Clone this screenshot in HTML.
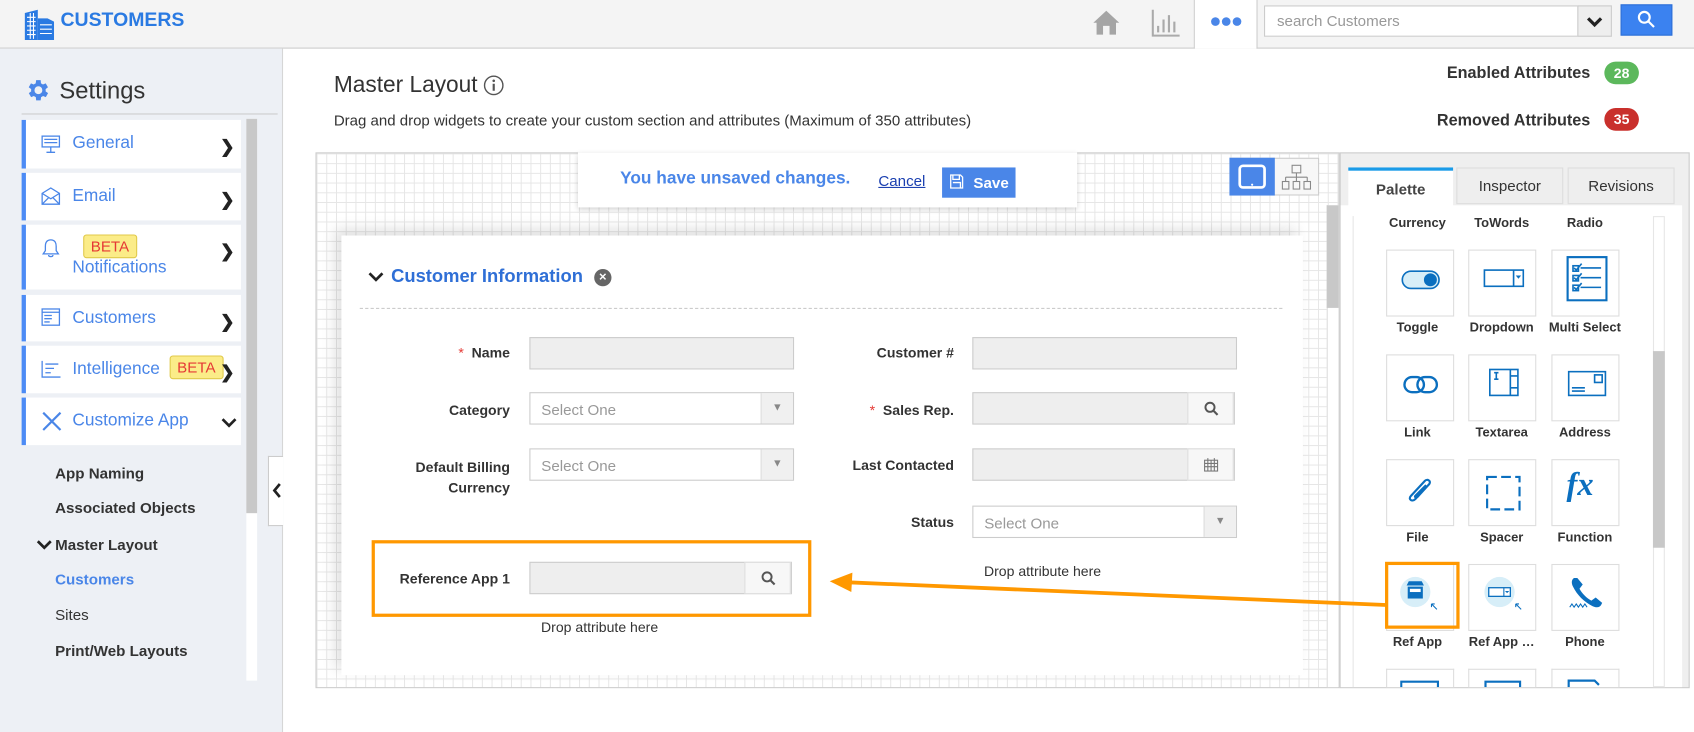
<!DOCTYPE html>
<html><head><meta charset="utf-8">
<style>
*{box-sizing:border-box;margin:0;padding:0}
html,body{width:1694px;height:732px;overflow:hidden;background:#fff;font-family:"Liberation Sans",Arial,sans-serif;color:#333}
#w{position:absolute;left:0;top:0;width:1568px;height:678px;transform:scale(1.08036);transform-origin:0 0}
.a{position:absolute}
.hdr{left:0;top:0;width:1568px;height:45px;background:#f4f4f4;border-bottom:1px solid #ccc}
.side{left:0;top:45px;width:262px;height:633px;background:#edf0f5;border-right:1px solid #d6d6d6}
.mi{position:absolute;left:20px;width:203px;background:#fff;border-left:4px solid #4c8bf5;font-size:16px;color:#4a86e8}
.mi .t{position:absolute;left:43px}
.mi .ic{position:absolute;left:14px}
.chev{position:absolute;right:6px;font-size:16px;color:#222;font-weight:bold}
.sub{position:absolute;left:51px;font-size:14px;font-weight:bold;color:#333}
.beta{position:absolute;background:#fbec88;border:1px solid #e0c94a;border-radius:3px;color:#e53935;font-size:14px;padding:2px 6px;font-weight:normal}
.grid{background-color:#fff;background-image:linear-gradient(#e6e6e6 1px,transparent 1px),linear-gradient(90deg,#e6e6e6 1px,transparent 1px);background-size:9px 9px}
.lbl{position:absolute;font-size:13px;font-weight:bold;color:#333;text-align:right}
.inp{position:absolute;height:30px;background:#eee;border:1px solid #ccc}
.sel{position:absolute;height:30px;background:#fff;border:1px solid #ccc;font-size:14px;color:#999;padding:7px 10px}
.sel .dd{position:absolute;right:0;top:0;width:30px;height:28px;background:#f0f0f0;border-left:1px solid #ddd;color:#888;font-size:10px;text-align:center;line-height:28px}
.addon{position:absolute;right:0;top:-1px;width:43px;height:30px;background:#f7f7f7;border:1px solid #ddd}
.tile{position:absolute;width:63px;height:62px;background:#fff;border:1px solid #ddd}
.tl{position:absolute;width:80px;text-align:center;font-size:12px;font-weight:bold;color:#333}
</style></head><body><div id="w">
<!-- header -->
<div class="a hdr"></div>
<svg class="a" style="left:22px;top:8px" width="30" height="30" viewBox="0 0 30 30"><path d="M1 4 L13 1 V29 H1Z" fill="#2a7ae2"/><path d="M13 9 H22 L28 12 V29 H13Z" fill="#2a7ae2"/><g stroke="#fff" stroke-width="1"><path d="M3 8H11M3 12H11M3 16H11M3 20H11M3 24H11M15 15H26M15 19H26M15 23H26"/><path d="M6 4V28M9 4V28"/></g></svg>
<div class="a" style="left:56px;top:8px;font-size:18px;font-weight:bold;color:#2a7ae2">CUSTOMERS</div>
<svg class="a" style="left:1011px;top:8px" width="26" height="25" viewBox="0 0 26 25"><path d="M13 2 L1 13 H4 V24 H10 V16 H16 V24 H22 V13 H25Z" fill="#a5a5a5"/></svg>
<svg class="a" style="left:1066px;top:8px" width="26" height="26" viewBox="0 0 26 26"><g stroke="#aaa" stroke-width="2" fill="none"><path d="M1 1V25H26"/><path d="M6 22V16M11 22V10M16 22V6M21 22V12"/></g></svg>
<div class="a" style="left:1105px;top:0;width:1px;height:45px;background:#ccc"></div>
<div class="a" style="left:1163px;top:0;width:1px;height:45px;background:#ccc"></div>
<div class="a" style="left:1106px;top:0;width:57px;height:45px;background:#fff"></div>
<svg class="a" style="left:1120px;top:14px" width="30" height="12" viewBox="0 0 30 12"><circle cx="5" cy="6" r="4" fill="#4a86e8"/><circle cx="15" cy="6" r="4" fill="#4a86e8"/><circle cx="25" cy="6" r="4" fill="#4a86e8"/></svg>
<div class="a" style="left:1170px;top:5px;width:322px;height:29px;background:#fff;border:1px solid #ccc"></div>
<div class="a" style="left:1182px;top:11px;font-size:14px;color:#999">search Customers</div>
<div class="a" style="left:1460px;top:5px;width:32px;height:29px;background:#eee;border:1px solid #ccc"></div>
<svg class="a" style="left:1466px;top:14px" width="20" height="12" viewBox="0 0 20 12"><path d="M4 3 L10 9 L16 3" stroke="#222" stroke-width="3" fill="none"/></svg>
<div class="a" style="left:1500px;top:4px;width:48px;height:29px;background:#3b82f0;border:1px solid #2d6fd6"></div>
<svg class="a" style="left:1515px;top:9px" width="18" height="18" viewBox="0 0 18 18"><circle cx="7" cy="7" r="5" stroke="#fff" stroke-width="2" fill="none"/><path d="M11 11 L16 16" stroke="#fff" stroke-width="2"/></svg>
<!-- sidebar -->
<div class="a side"></div>
<svg class="a" style="left:22px;top:71px" width="25" height="25" viewBox="0 0 24 24"><path fill="#4a86e8" d="M19.4 13a7.5 7.5 0 0 0 0-2l2.1-1.6-2-3.5-2.5 1a7 7 0 0 0-1.7-1L15 3h-4l-.4 2.9a7 7 0 0 0-1.7 1l-2.5-1-2 3.5L6.6 11a7.5 7.5 0 0 0 0 2l-2.1 1.6 2 3.5 2.5-1a7 7 0 0 0 1.7 1L11 21h4l.4-2.9a7 7 0 0 0 1.7-1l2.5 1 2-3.5zM13 15.5a3.5 3.5 0 1 1 0-7 3.5 3.5 0 0 1 0 7z"/></svg>
<div class="a" style="left:55px;top:71px;font-size:22px;color:#333">Settings</div>
<div class="a" style="left:20px;top:105px;width:237px;height:1px;background:#ccc"></div>
<div class="mi" style="top:111px;height:45px"><svg class="ic" style="top:14px" width="18" height="17" viewBox="0 0 18 17"><g stroke="#4a86e8" fill="none" stroke-width="1.2"><rect x="1" y="1" width="16" height="10"/><path d="M3 4H15M3 7H15M9 11V16M5 16H13"/></g></svg><span class="t" style="top:13px">General</span><span class="chev" style="top:15px">&#10095;</span></div>
<div class="mi" style="top:160px;height:44px"><svg class="ic" style="top:13px" width="18" height="17" viewBox="0 0 18 17"><g stroke="#4a86e8" fill="none" stroke-width="1.2"><path d="M1 6 L9 1 L17 6 V16 H1Z"/><path d="M1 6 L9 11 L17 6M1 16 L7 10M17 16 L11 10"/></g></svg><span class="t" style="top:13px">Email</span><span class="chev" style="top:15px">&#10095;</span></div>
<div class="mi" style="top:208px;height:60px"><svg class="ic" style="top:12px" width="18" height="20" viewBox="0 0 18 20"><path d="M9 2 C5 2 4 5 4 8 V12 L2 15 H16 L14 12 V8 C14 5 13 2 9 2Z M7 16 C7 18 11 18 11 16" stroke="#4a86e8" fill="none" stroke-width="1.2"/></svg><span class="beta" style="left:53px;top:9px">BETA</span><span class="t" style="top:31px">Notifications</span><span class="chev" style="top:15px">&#10095;</span></div>
<div class="mi" style="top:273px;height:43px"><svg class="ic" style="top:12px" width="18" height="17" viewBox="0 0 18 17"><g stroke="#4a86e8" fill="none" stroke-width="1.2"><rect x="1" y="1" width="16" height="15"/><path d="M1 4H17M3 7H10M3 10H10M3 13H8"/></g></svg><span class="t" style="top:13px">Customers</span><span class="chev" style="top:15px">&#10095;</span></div>
<div class="mi" style="top:320px;height:44px"><svg class="ic" style="top:13px" width="18" height="17" viewBox="0 0 18 17"><g stroke="#4a86e8" fill="none" stroke-width="1.2"><path d="M1 1V16H18M4 4H16M4 8H12M4 12H9"/></g></svg><span class="t" style="top:13px">Intelligence</span><span class="beta" style="left:133px;top:9px">BETA</span><span class="chev" style="top:15px">&#10095;</span></div>
<div class="mi" style="top:368px;height:44px"><svg class="ic" style="top:12px" width="20" height="19" viewBox="0 0 20 19"><g stroke="#4a86e8" stroke-width="2" fill="none"><path d="M2 2 L18 18M18 2 L2 18"/></g></svg><span class="t" style="top:13px">Customize App</span><svg style="position:absolute;right:4px;top:18px" width="14" height="10" viewBox="0 0 14 10"><path d="M1 2 L7 8 L13 2" stroke="#222" stroke-width="2.5" fill="none"/></svg></div>
<div class="a" style="left:228px;top:110px;width:10px;height:520px;background:#fff"></div>
<div class="a" style="left:228px;top:110px;width:10px;height:365px;background:#c8c8c8"></div>
<div class="sub" style="top:430px">App Naming</div>
<div class="sub" style="top:462px">Associated Objects</div>
<div class="sub" style="top:496px">Master Layout</div>
<svg class="a" style="left:34px;top:499px" width="14" height="11" viewBox="0 0 14 11"><path d="M1 2 L7 8 L13 2" stroke="#222" stroke-width="2.5" fill="none"/></svg>
<div class="sub" style="top:528px;color:#4a86e8">Customers</div>
<div class="sub" style="top:561px;font-weight:normal">Sites</div>
<div class="sub" style="top:594px">Print/Web Layouts</div>
<div class="a" style="left:248px;top:422px;width:14px;height:65px;background:#fff;border:1px solid #ccc;border-right:none"></div>
<svg class="a" style="left:252px;top:447px" width="9" height="14" viewBox="0 0 9 14"><path d="M7 1 L2 7 L7 13" stroke="#222" stroke-width="2.5" fill="none"/></svg>
<!-- main -->
<div class="a" style="left:309px;top:67px;font-size:21px;color:#333">Master Layout</div>
<svg class="a" style="left:447px;top:69px" width="20" height="20" viewBox="0 0 20 20"><circle cx="10" cy="10" r="8.5" stroke="#555" stroke-width="1.3" fill="none"/><circle cx="10" cy="5.8" r="1.2" fill="#555"/><path d="M10 8.5V15" stroke="#555" stroke-width="2"/></svg>
<div class="a" style="left:309px;top:103px;font-size:13.9px;color:#333">Drag and drop widgets to create your custom section and attributes (Maximum of 350 attributes)</div>
<div class="a" style="left:1300px;top:59px;width:172px;text-align:right;font-size:15px;font-weight:bold;color:#333">Enabled Attributes</div>
<div class="a" style="left:1485px;top:57px;width:32px;height:21px;border-radius:11px;background:#5cb85c;color:#fff;font-size:13px;font-weight:bold;text-align:center;line-height:21px">28</div>
<div class="a" style="left:1300px;top:103px;width:172px;text-align:right;font-size:15px;font-weight:bold;color:#333">Removed Attributes</div>
<div class="a" style="left:1485px;top:100px;width:32px;height:21px;border-radius:11px;background:#c9302c;color:#fff;font-size:13px;font-weight:bold;text-align:center;line-height:21px">35</div>
<!-- canvas -->
<div class="a grid" style="left:292px;top:141px;width:948px;height:496px;border:1px solid #ccc"></div>
<div class="a" style="left:316px;top:218px;width:890px;height:407px;background:#fff;box-shadow:-6px -6px 12px rgba(0,0,0,0.12)"></div>
<div class="a" style="left:1228px;top:190px;width:11px;height:446px;background:#fff;border-left:1px solid #ddd"></div>
<div class="a" style="left:1228px;top:190px;width:11px;height:95px;background:#c8c8c8"></div>
<div class="a" style="left:535px;top:141px;width:462px;height:51px;background:#fff;box-shadow:0 2px 5px rgba(0,0,0,0.2)"></div>
<div class="a" style="left:574px;top:157px;font-size:16px;font-weight:bold;color:#4a86e8">You have unsaved changes.</div>
<div class="a" style="left:813px;top:159px;font-size:14px;color:#1a3fb0;text-decoration:underline">Cancel</div>
<div class="a" style="left:872px;top:155px;width:68px;height:28px;background:#4a86e8;color:#fff;font-size:14px;font-weight:bold;padding:6px 0 0 29px">Save</div>
<svg class="a" style="left:879px;top:161px" width="13" height="14" viewBox="0 0 13 14"><path d="M1 1H10L12 3V13H1Z M3 1V5H9V1 M3 8H10V13" stroke="#fff" fill="none" stroke-width="1.2"/></svg>
<div class="a" style="left:1138px;top:146px;width:83px;height:35px;border:1px solid #ccc;background:#f7f7f7"></div>
<div class="a" style="left:1138px;top:146px;width:42px;height:35px;background:#4a86e8"></div>
<svg class="a" style="left:1146px;top:152px" width="26" height="23" viewBox="0 0 26 23"><rect x="1.5" y="1.5" width="23" height="20" rx="3" stroke="#fff" stroke-width="2.5" fill="none"/><circle cx="13" cy="19" r="1" fill="#fff"/></svg>
<svg class="a" style="left:1186px;top:152px" width="28" height="24" viewBox="0 0 28 24"><g stroke="#888" fill="none" stroke-width="1"><rect x="10" y="1" width="8" height="7"/><path d="M14 8V12M4 12H24M4 12V16M14 12V16M24 12V16"/><rect x="1" y="16" width="6" height="7"/><rect x="11" y="16" width="6" height="7"/><rect x="21" y="16" width="6" height="7"/></g></svg>
<!-- section -->
<svg class="a" style="left:341px;top:251px" width="14" height="10" viewBox="0 0 14 10"><path d="M1 2 L7 8 L13 2" stroke="#222" stroke-width="2.5" fill="none"/></svg>
<div class="a" style="left:362px;top:246px;font-size:17px;font-weight:bold;color:#2f6fd6">Customer Information</div>
<div class="a" style="left:550px;top:249px;width:16px;height:16px;border-radius:50%;background:#666;color:#fff;font-size:12px;text-align:center;line-height:15px;font-weight:bold">×</div>
<div class="a" style="left:333px;top:285px;width:854px;border-top:1px dashed #ccc"></div>
<div class="lbl" style="left:330px;top:319px;width:142px"><span style="color:#e53935;font-weight:normal">*</span>&nbsp; Name</div>
<div class="inp" style="left:490px;top:312px;width:245px"></div>
<div class="lbl" style="left:330px;top:372px;width:142px">Category</div>
<div class="sel" style="left:490px;top:363px;width:245px">Select One<div class="dd">▼</div></div>
<div class="lbl" style="left:330px;top:423px;width:142px;line-height:19px">Default Billing<br>Currency</div>
<div class="sel" style="left:490px;top:415px;width:245px">Select One<div class="dd">▼</div></div>
<div class="lbl" style="left:740px;top:319px;width:143px">Customer #</div>
<div class="inp" style="left:900px;top:312px;width:245px"></div>
<div class="lbl" style="left:740px;top:372px;width:143px"><span style="color:#e53935;font-weight:normal">*</span>&nbsp; Sales Rep.</div>
<div class="inp" style="left:900px;top:363px;width:243px"><div class="addon"></div></div>
<svg class="a" style="left:1114px;top:371px" width="14" height="14" viewBox="0 0 14 14"><circle cx="6" cy="6" r="4.2" stroke="#555" stroke-width="1.8" fill="none"/><path d="M9 9 L13 13" stroke="#555" stroke-width="2"/></svg>
<div class="lbl" style="left:740px;top:423px;width:143px">Last Contacted</div>
<div class="inp" style="left:900px;top:415px;width:243px"><div class="addon"></div></div>
<svg class="a" style="left:1114px;top:423px" width="14" height="14" viewBox="0 0 14 14"><g stroke="#777" fill="none" stroke-width="1"><rect x="1" y="3" width="12" height="10"/><path d="M1 6H13M1 9H13M4 3V13M7 3V13M10 3V13M4 1V4M10 1V4"/></g></svg>
<div class="lbl" style="left:740px;top:476px;width:143px">Status</div>
<div class="sel" style="left:900px;top:468px;width:245px">Select One<div class="dd">▼</div></div>
<div class="a" style="left:880px;top:521px;width:170px;text-align:center;font-size:13px;color:#333">Drop attribute here</div>
<div class="a" style="left:344px;top:500px;width:407px;height:71px;border:3px solid #ff9800"></div>
<div class="lbl" style="left:340px;top:528px;width:132px">Reference App 1</div>
<div class="inp" style="left:490px;top:520px;width:243px"><div class="addon"></div></div>
<svg class="a" style="left:704px;top:528px" width="14" height="14" viewBox="0 0 14 14"><circle cx="6" cy="6" r="4.2" stroke="#555" stroke-width="1.8" fill="none"/><path d="M9 9 L13 13" stroke="#555" stroke-width="2"/></svg>
<div class="a" style="left:470px;top:573px;width:170px;text-align:center;font-size:13px;color:#333">Drop attribute here</div>
<!-- palette -->
<div class="a" style="left:1240px;top:141px;width:324px;height:496px;background:#efefef;border:1px solid #ccc"></div>
<div class="a" style="left:1248px;top:155px;width:97px;height:36px;background:#fff;border-top:3px solid #1a9be8;font-size:14px;font-weight:bold;color:#444;text-align:center;padding-top:9px">Palette</div>
<div class="a" style="left:1348px;top:155px;width:99px;height:34px;background:#eee;border:1px solid #ddd;font-size:14px;color:#333;text-align:center;padding-top:8px">Inspector</div>
<div class="a" style="left:1451px;top:155px;width:99px;height:34px;background:#eee;border:1px solid #ddd;font-size:14px;color:#333;text-align:center;padding-top:8px">Revisions</div>
<div class="a" style="left:1241px;top:190px;width:316px;height:446px;background:#fff"></div>
<div class="a" style="left:1252px;top:200px;width:1px;height:436px;background:#e6e6e6"></div>
<div class="a" style="left:1530px;top:200px;width:11px;height:436px;background:#fff;border:1px solid #e6e6e6"></div>
<div class="a" style="left:1530px;top:325px;width:11px;height:182px;background:#c8c8c8"></div>
<div class="tl" style="left:1272px;top:199px">Currency</div><div class="tl" style="left:1350px;top:199px">ToWords</div><div class="tl" style="left:1427px;top:199px">Radio</div>
<div class="tile" style="left:1283px;top:231px"></div><div class="tile" style="left:1359px;top:231px"></div><div class="tile" style="left:1436px;top:231px"></div>
<div class="tl" style="left:1272px;top:296px">Toggle</div><div class="tl" style="left:1350px;top:296px">Dropdown</div><div class="tl" style="left:1427px;top:296px">Multi Select</div>
<div class="tile" style="left:1283px;top:328px"></div><div class="tile" style="left:1359px;top:328px"></div><div class="tile" style="left:1436px;top:328px"></div>
<div class="tl" style="left:1272px;top:393px">Link</div><div class="tl" style="left:1350px;top:393px">Textarea</div><div class="tl" style="left:1427px;top:393px">Address</div>
<div class="tile" style="left:1283px;top:425px"></div><div class="tile" style="left:1359px;top:425px"></div><div class="tile" style="left:1436px;top:425px"></div>
<div class="tl" style="left:1272px;top:490px">File</div><div class="tl" style="left:1350px;top:490px">Spacer</div><div class="tl" style="left:1427px;top:490px">Function</div>
<div class="tile" style="left:1283px;top:522px"></div><div class="tile" style="left:1359px;top:522px"></div><div class="tile" style="left:1436px;top:522px"></div>
<div class="tl" style="left:1272px;top:587px">Ref App</div><div class="tl" style="left:1350px;top:587px">Ref App …</div><div class="tl" style="left:1427px;top:587px">Phone</div>
<div class="tile" style="left:1283px;top:619px;height:17px;border-bottom:none"></div><div class="tile" style="left:1359px;top:619px;height:17px;border-bottom:none"></div><div class="tile" style="left:1436px;top:619px;height:17px;border-bottom:none"></div>
<div class="a" style="left:1282px;top:520px;width:69px;height:62px;border:3px solid #ff9800"></div>
<!-- tile icons -->
<svg class="a" style="left:1297px;top:249px" width="36" height="20" viewBox="0 0 36 20"><rect x="1" y="2" width="34" height="16" rx="8" fill="#d7eef8" stroke="#0b6fbf" stroke-width="1.5"/><circle cx="27" cy="10" r="6" fill="#0b6fbf"/></svg>
<svg class="a" style="left:1373px;top:249px" width="38" height="18" viewBox="0 0 38 18"><rect x="1" y="1" width="36" height="15" fill="none" stroke="#0b6fbf" stroke-width="1.5"/><path d="M28 1V16" stroke="#0b6fbf" stroke-width="1.5"/><path d="M30 6H35L32.5 9Z" fill="#0b6fbf"/></svg>
<svg class="a" style="left:1450px;top:237px" width="38" height="42" viewBox="0 0 38 42"><rect x="1" y="1" width="36" height="40" fill="none" stroke="#0b6fbf" stroke-width="2"/><g stroke="#0b6fbf" stroke-width="1.5" fill="none"><rect x="6" y="9" width="5" height="5"/><rect x="6" y="18" width="5" height="5"/><rect x="6" y="27" width="5" height="5"/><path d="M7 11 L9 13 L14 7M7 20 L9 22 L14 16M7 29 L9 31 L14 25M13 11H32M13 20H32M13 29H32"/></g></svg>
<svg class="a" style="left:1298px;top:346px" width="34" height="20" viewBox="0 0 34 20"><g stroke="#0b6fbf" stroke-width="2.2" fill="none"><rect x="2" y="3" width="18" height="14" rx="7"/><rect x="14" y="3" width="18" height="14" rx="7"/></g></svg>
<svg class="a" style="left:1378px;top:341px" width="28" height="26" viewBox="0 0 28 26"><g stroke="#0b6fbf" stroke-width="1.5" fill="none"><rect x="1" y="1" width="26" height="24"/><path d="M20 1V25M20 7H27M20 18H27M5 4H9M7 4V10M5 10H9"/></g></svg>
<svg class="a" style="left:1451px;top:343px" width="36" height="24" viewBox="0 0 36 24"><g stroke="#0b6fbf" stroke-width="1.5" fill="none"><rect x="1" y="1" width="34" height="22"/><rect x="25" y="4" width="7" height="7"/><path d="M4 16H16M4 19H16"/></g></svg>
<svg class="a" style="left:1301px;top:440px" width="28" height="30" viewBox="0 0 28 30"><path d="M22 8 L9 22 C6 25 2 22 5 19 L18 5 C20 3 24 5 22 8 L11 20 C10 21 8 20 9 19 L19 9" stroke="#0b6fbf" stroke-width="2" fill="none"/></svg>
<svg class="a" style="left:1375px;top:440px" width="33" height="33" viewBox="0 0 33 33"><rect x="1.5" y="1.5" width="30" height="30" stroke="#0b6fbf" stroke-width="2" fill="none" stroke-dasharray="9 4"/></svg>
<div class="a" style="left:1450px;top:432px;font-family:'Liberation Serif',serif;font-style:italic;font-weight:bold;font-size:30px;color:#0b6fbf">fx</div>
<svg class="a" style="left:1295px;top:533px" width="40" height="36" viewBox="0 0 40 36"><circle cx="15" cy="15" r="14" fill="#d7eef8"/><path d="M7 9 L9 5 H21 L23 9Z" fill="#0b6fbf"/><rect x="8" y="10" width="14" height="11" fill="#0b6fbf"/><rect x="10" y="12" width="10" height="3" fill="#fff"/><path d="M30 26 L35 31M30 26V29M30 26H33" stroke="#0b6fbf" stroke-width="1" fill="none"/></svg>
<svg class="a" style="left:1373px;top:533px" width="40" height="36" viewBox="0 0 40 36"><circle cx="15" cy="15" r="14" fill="#d7eef8"/><rect x="5" y="11" width="20" height="8" stroke="#0b6fbf" stroke-width="1.2" fill="#fff"/><path d="M19 11V19" stroke="#0b6fbf"/><path d="M20 14H24L22 16Z" fill="#0b6fbf"/><path d="M30 26 L35 31M30 26V29M30 26H33" stroke="#0b6fbf" stroke-width="1" fill="none"/></svg>
<svg class="a" style="left:1452px;top:532px" width="34" height="34" viewBox="0 0 34 34"><path d="M5 3 C3 4 2 7 4 11 C8 19 14 25 22 29 C26 31 29 30 30 28 L31 26 L25 21 L21 24 C17 22 12 17 10 13 L13 9 L8 3Z" fill="#0b6fbf"/><path d="M1 30 L3 27 L5 30 L7 27 L9 30 L11 27 L13 30 L15 27 L17 30" stroke="#0b6fbf" fill="none" stroke-width="1"/></svg>
<svg class="a" style="left:1296px;top:629px" width="36" height="7" viewBox="0 0 36 7"><path d="M1 7V2H35V7" stroke="#0b6fbf" stroke-width="2" fill="none"/></svg>
<svg class="a" style="left:1373px;top:629px" width="36" height="7" viewBox="0 0 36 7"><path d="M2 7V2H34V7" stroke="#0b6fbf" stroke-width="2" fill="none"/></svg>
<svg class="a" style="left:1450px;top:628px" width="36" height="8" viewBox="0 0 36 8"><path d="M2 8V2H26L30 6" stroke="#0b6fbf" stroke-width="2" fill="none"/></svg>
<!-- arrow -->
<svg class="a" style="left:0;top:0" width="1568" height="678" viewBox="0 0 1568 678"><path d="M1283 560 L785 539" stroke="#ff9800" stroke-width="3.5" fill="none"/><path d="M768 538 L789 530 L788 548Z" fill="#ff9800"/></svg>
</div></body></html>
